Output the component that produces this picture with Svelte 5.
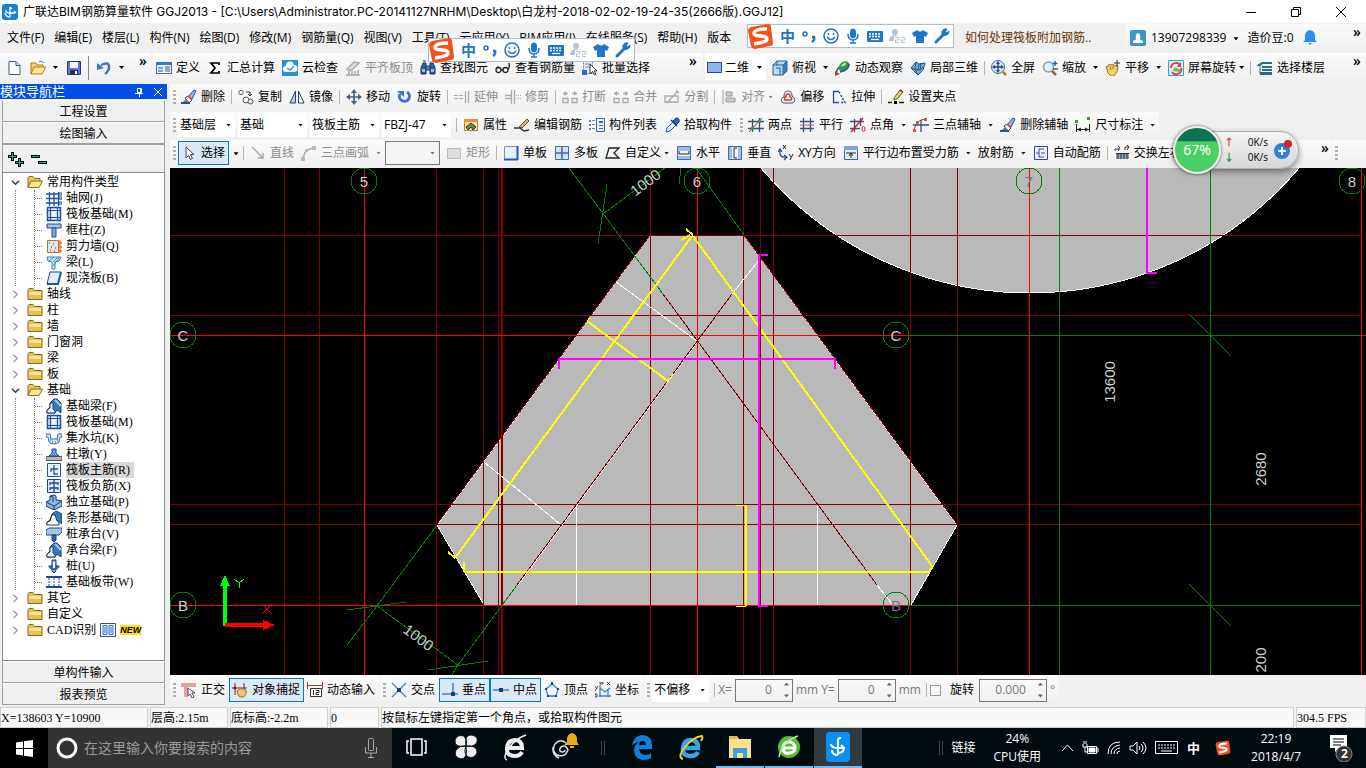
<script lang="ts">
	type Tool = {
		text?: string;
		icon?: string;
		off?: boolean;
		on?: boolean;
		drop?: boolean;
		tight?: boolean;
		sep?: boolean;
	};

	const sep: Tool = { sep: true };

	const menus = [
		'文件(F)',
		'编辑(E)',
		'楼层(L)',
		'构件(N)',
		'绘图(D)',
		'修改(M)',
		'钢筋量(Q)',
		'视图(V)',
		'工具(T)',
		'云应用(Y)',
		'BIM应用(I)',
		'在线服务(S)',
		'帮助(H)',
		'版本'
	];

	const mainTools: Tool[] = [
		{ text: '定义', icon: 'define' },
		{ text: '汇总计算', icon: 'sum' },
		{ text: '云检查', icon: 'cloud' },
		{ text: '平齐板顶', icon: 'level', off: true },
		{ text: '查找图元', icon: 'find' },
		{ text: '查看钢筋量', icon: 'glasses' },
		{ text: '批量选择', icon: 'batch' }
	];

	const viewTools: Tool[] = [
		{ text: '俯视', icon: 'cube', drop: true },
		{ text: '动态观察', icon: 'orbit' },
		{ text: '局部三维', icon: 'local3d' },
		sep,
		{ text: '全屏', icon: 'fullscreen' },
		{ text: '缩放', icon: 'zoom', drop: true },
		{ text: '平移', icon: 'hand', drop: true },
		{ text: '屏幕旋转', icon: 'spin', drop: true, tight: true },
		sep,
		{ text: '选择楼层', icon: 'floors' }
	];

	const editTools: Tool[] = [
		{ text: '删除', icon: 'brush' },
		sep,
		{ text: '复制', icon: 'copy' },
		{ text: '镜像', icon: 'mirror' },
		sep,
		{ text: '移动', icon: 'move' },
		{ text: '旋转', icon: 'rotate' },
		sep,
		{ text: '延伸', icon: 'extend', off: true },
		{ text: '修剪', icon: 'trim', off: true },
		sep,
		{ text: '打断', icon: 'break', off: true },
		{ text: '合并', icon: 'break', off: true },
		{ text: '分割', icon: 'split', off: true },
		sep,
		{ text: '对齐', icon: 'align', off: true, drop: true, tight: true },
		{ text: '偏移', icon: 'offset' },
		{ text: '拉伸', icon: 'stretch' },
		sep,
		{ text: '设置夹点', icon: 'pencil' }
	];

	const partTools: Tool[] = [
		sep,
		{ text: '属性', icon: 'props' },
		{ text: '编辑钢筋', icon: 'rebar' },
		{ text: '构件列表', icon: 'list' },
		{ text: '拾取构件', icon: 'dropper' }
	];

	const axisTools: Tool[] = [
		{ text: '两点', icon: 'twoPoint' },
		{ text: '平行', icon: 'parallel' },
		{ text: '点角', icon: 'pointAngle', drop: true },
		{ text: '三点辅轴', icon: 'threePoint', drop: true },
		{ text: '删除辅轴', icon: 'brush' },
		{ text: '尺寸标注', icon: 'dimension', drop: true }
	];

	const lineTools: Tool[] = [
		{ text: '选择', icon: 'cursor', on: true, drop: true },
		sep,
		{ text: '直线', icon: 'line', off: true },
		{ text: '三点画弧', icon: 'arc', off: true, drop: true }
	];

	const slabTools: Tool[] = [
		{ text: '矩形', icon: 'rect', off: true },
		sep,
		{ text: '单板', icon: 'slab' },
		{ text: '多板', icon: 'slabs' },
		{ text: '自定义', icon: 'custom', drop: true, tight: true },
		{ text: '水平', icon: 'horizontal' },
		{ text: '垂直', icon: 'vertical' },
		{ text: 'XY方向', icon: 'xy' },
		{ text: '平行边布置受力筋', icon: 'edge', drop: true },
		{ text: '放射筋', drop: true },
		{ text: '自动配筋', icon: 'auto' },
		sep,
		{ text: '交换左右', icon: 'swap' }
	];

	const snapTools: Tool[] = [
		{ text: '正交', icon: 'ortho' },
		{ text: '对象捕捉', icon: 'snap', on: true },
		{ text: '动态输入', icon: 'dynInput' }
	];

	const pointTools: Tool[] = [
		{ text: '交点', icon: 'cross' },
		{ text: '垂点', icon: 'perp', on: true },
		{ text: '中点', icon: 'mid', on: true },
		{ text: '顶点', icon: 'vertex' },
		{ text: '坐标', icon: 'coord' }
	];

	const tree = [
		{
			name: '常用构件类型',
			children: [
				['轴网(J)', 'grid'],
				['筏板基础(M)', 'raft'],
				['框柱(Z)', 'column'],
				['剪力墙(Q)', 'wall'],
				['梁(L)', 'beam'],
				['现浇板(B)', 'cast']
			]
		},
		{ name: '轴线' },
		{ name: '柱' },
		{ name: '墙' },
		{ name: '门窗洞' },
		{ name: '梁' },
		{ name: '板' },
		{
			name: '基础',
			children: [
				['基础梁(F)', 'fbeam'],
				['筏板基础(M)', 'raft'],
				['集水坑(K)', 'pit'],
				['柱墩(Y)', 'pier'],
				['筏板主筋(R)', 'mainbar'],
				['筏板负筋(X)', 'negbar'],
				['独立基础(P)', 'pad'],
				['条形基础(T)', 'strip'],
				['桩承台(V)', 'cap'],
				['承台梁(F)', 'fbeam'],
				['桩(U)', 'pile'],
				['基础板带(W)', 'band']
			]
		},
		{ name: '其它' },
		{ name: '自定义' },
		{ name: 'CAD识别', isNew: true }
	];

	const selected = '筏板主筋(R)';

	// 16x16 icon bodies
	const icons: Record<string, string> = {
		file: '<path d="M3 1.500h7l4 4v9H3z" fill="#fff" stroke="#355a8c"/><path d="M10 1.500v4h4" fill="#cfe0f5" stroke="#355a8c"/>',
		open: '<path d="M1 14V3h5l1 2h6v3" fill="#f7d36b" stroke="#b07b10"/><path d="M1 14l3-7h12l-4 7z" fill="#ffe79a" stroke="#b07b10"/><path d="M9 2q3-2 5 1" fill="none" stroke="#4a6ea5"/>',
		save: '<path d="M1.500 1.500h13v13h-13z" fill="#5f78d8" stroke="#27357f"/><path d="M4 2h8v6H4z" fill="#f5f8ff"/><path d="M4 10h8v5H4z" fill="#26305f"/><path d="M9 11h2v3H9z" fill="#fff"/>',
		undo: '<path d="M5 5q8-4 8 2q0 4-4 7" fill="none" stroke="#3f73d6" stroke-width="2.500"/><path d="M1 3v7l7-2z" fill="#3f73d6"/>',
		define: '<path d="M.5 2.500h15v11H.5z" fill="#eef4ff" stroke="#3d6ab5"/><path d="M1 3h14v2H1z" fill="#3d78d8"/><path d="M2 7h5v2H2zM2 10h5v2H2z" fill="#7ea0d0"/><path d="M9 7h5M9 9h5M9 11h5" stroke="#555"/>',
		sum: '<path d="M12 5V3H4l4 5-4 5h8v-2" fill="none" stroke="#000" stroke-width="1.700"/>',
		cloud: '<path d="M0 0h16v16H0z" fill="#1f93dc"/><path d="M4 12a3 3 0 010-6 4 4 0 018-1 3.500 3.500 0 010 7z" fill="#fff"/><path d="M5 8l3 2 4-4" fill="none" stroke="#1f93dc" stroke-width="1.500"/>',
		level: '<path d="M2 9l7-7 5 1-7 7zM1 15h14M4 10v5M7 11v4M10 11v4M13 10v5" fill="#ddd" stroke="#aaa" stroke-width="1.500"/>',
		find: '<path d="M1 14V8l2-5h3v11zM15 14V8l-2-5h-3v11z" fill="#2d5ea8" stroke="#1b335f"/><path d="M6 6h4v4H6zM3 1h3M10 1h3" fill="#4f86cf" stroke="#1b335f"/><path d="M2 9h3v3H2zM11 9h3v3h-3z" fill="#9cc0ea"/>',
		glasses: '<path d="M1 10a2.500 2.500 0 105 0a2.500 2.500 0 10-5 0M8 10a2.500 2.500 0 105 0a2.500 2.500 0 10-5 0M6 10h2M13 10q2-3 1-7M1 10q0-3 3-3" fill="none" stroke="#222" stroke-width="1.300"/>',
		batch: '<path d="M1.500 1.500h9v12h-9z" fill="#e4e9f2" stroke="#888" stroke-dasharray="2 1"/><path d="M0 10h5v5H0z" fill="#2f6bd3"/><path d="M3 4h6M3 7h6" stroke="#7a97c0"/><path d="M8 4v10l2.500-2.500 2 3.500 1.500-1-2-3h3z" fill="#fff" stroke="#333"/>',
		cube: '<path d="M1 5l4-4h10v10l-4 4H1z" fill="#bcd9f3" stroke="#245a8f"/><path d="M1 5h10v10M11 5l4-4M4 8h4v7M5 1v4" fill="none" stroke="#245a8f"/><path d="M11 5l4-4v10l-4 4z" fill="#3a79b4"/>',
		orbit: '<path d="M1 14Q2 7 8 5" fill="none" stroke="#2f5598" stroke-width="1.500"/><ellipse cx="9" cy="6.500" rx="6" ry="4.500" transform="rotate(-40 9 6.500)" fill="#2f9a4a"/><path d="M6 6q3-4 5-3-1 4-5 3" fill="#c6ecca"/><path d="M14 4q0 6-9 8" fill="none" stroke="#2f5598" stroke-width="1.500"/><path d="M0 11l5 3-5 2z" fill="#c23a2e"/>',
		local3d: '<path d="M1 8l5-6 3 2 6-1-2 7-5 5-3-3z" fill="#7fb0dc" stroke="#1d5583"/><path d="M6 2l-1 7 3 6M9 4l-1 6M1 8l7 2 6-3M11 3l-1 8" fill="none" stroke="#1d5583"/>',
		fullscreen: '<circle cx="7" cy="7" r="6.500" fill="#d5e4f8" stroke="#4a6a9a"/><path d="M7 3v8M3 7h8" stroke="#20487f" stroke-width="1.300"/><path d="M7 1L5 4h4zM7 13l-2-3h4zM1 7l3-2v4zM13 7l-3-2v4z" fill="#20487f"/><path d="M12 12l3 3" stroke="#b57a24" stroke-width="2.500"/>',
		zoom: '<circle cx="6.500" cy="7" r="5" fill="#e6f0fb" stroke="#8aa0ba" stroke-width="1.500"/><path d="M10 11l4 4" stroke="#9a6a32" stroke-width="2.500"/><path d="M13 1v5M10.500 3.500h5M11 9h5" stroke="#2a5fae" stroke-width="1.500"/>',
		hand: '<path d="M2 9L1 7l2-1 1-2 2 1 2-1 1 2 3-1 1 2-1 5-3 4H6l-3-3z" fill="#f0cc72" stroke="#a4741c"/><path d="M5 6l1 4M8 6v3" stroke="#a4741c"/><path d="M12 0v7M9 3h6" stroke="#333"/>',
		spin: '<path d="M.5.5h15v15H.5z" fill="#d4edf8" stroke="#3a9ccb"/><path d="M3 8a5 5 0 019-3M13 8a5 5 0 01-9 4" fill="none" stroke="#d93a2e" stroke-width="1.800"/><path d="M5 11q1-5 4-3t4 1v3z" fill="#74b64e"/><path d="M13 2v5H9z" fill="#d93a2e"/>',
		floors: '<path d="M0 5l5-3h10v2H6L3 6H0zM5 6h10v2H5zM5 9h10v2H5zM3 12h12v3H3z" fill="#2c6c7c"/><path d="M3 6v8" stroke="#2c6c7c"/>',
		brush: '<path d="M7 8l6-7 2 1-4 8z" fill="#8fb4e6" stroke="#2f4a7f"/><path d="M4 9l3-2 4 4-3 3z" fill="#f4f4f4" stroke="#444"/><path d="M7 7l4 4" stroke="#d23b2c" stroke-width="1.500"/><path d="M0 14h9" stroke="#24509a" stroke-width="2"/><path d="M2 13l3-3 3 3z" fill="#777"/>',
		copy: '<circle cx="3" cy="3.500" r="2.200" fill="#fff" stroke="#556"/><circle cx="8" cy="11" r="3" fill="#fff" stroke="#556"/><circle cx="12.500" cy="12.500" r="2.500" fill="#e5e5e5" stroke="#556"/><path d="M8 3h4v4M10 5l2 2 2-2" fill="none" stroke="#333"/>',
		mirror: '<path d="M6.500 2v12H1z" fill="#b8cdea" stroke="#24437e"/><path d="M9.500 2v12H15z" fill="#fff" stroke="#24437e"/>',
		move: '<path d="M8 2v12M2 8h12" stroke="#4a5f7e" stroke-width="1.700"/><path d="M8 0L5 4h6zM8 16l-3-4h6zM0 8l4-3v6zM16 8l-4-3v6z" fill="#4a5f7e"/>',
		rotate: '<path d="M3 5a5 5 0 107-2" fill="none" stroke="#3d72cf" stroke-width="3"/><path d="M0 2h7v6z" fill="#3d72cf"/>',
		extend: '<path d="M0 6.500h9M0 9.500h9" stroke="#aaa" stroke-dasharray="4 1"/><path d="M11.500 2v12M14.500 2v12" stroke="#aaa" stroke-width="1.300"/>',
		trim: '<path d="M6.500 1v14M9.500 1v14M0 6.500h6M0 9.500h6" stroke="#aaa" stroke-width="1.300"/><path d="M11 6.500h5M11 9.500h5" stroke="#aaa" stroke-dasharray="1 1"/>',
		break: '<path d="M1 4.500h5M10 4.500h5M1 9.500h5v4H1zM10 9.500h5v4h-5z" fill="none" stroke="#aaa" stroke-width="1.300"/><path d="M4 2v5L1 4.500zM12 2v5l3-2.500z" fill="#aaa"/>',
		split: '<path d="M1 7h13v6H1zM3 14L13 3M12 1l3 3" fill="none" stroke="#aaa" stroke-width="1.300"/>',
		align: '<path d="M2 1v14" stroke="#999"/><path d="M5 3h6v4H5zM5 9h9v4H5z" fill="#ccc" stroke="#999"/>',
		offset: '<path d="M3 14q-4-4 1-6 0-6 4-6t4 5q5 3 1 7z" fill="#e9f0f8" stroke="#395879"/><path d="M5 11q-1-3 1-3 0-3 2-3t2 3q3 1 1 3z" fill="#fff" stroke="#d33c35" stroke-width="1.500"/>',
		stretch: '<path d="M8 2.500H2.500v11H8" fill="none" stroke="#2c4b88" stroke-width="1.300"/><path d="M8 3l6 10.500H9" fill="none" stroke="#2c4b88" stroke-dasharray="2 1.500" stroke-width="1.500"/>',
		pencil: '<path d="M6 9l6-8 3 2-6 7-3 1z" fill="#e5cf86" stroke="#6c5426"/><path d="M12 1l3 2" stroke="#b8302a" stroke-width="2"/><path d="M0 13.500h4M11 13.500h5" stroke="#222" stroke-width="1.500"/><path d="M6 12h3v3H6z" fill="#000"/>',
		props: '<path d="M1.500 2.500h13v11h-13z" fill="#ffe7b0" stroke="#c87a1a"/><path d="M1 2h14v3H1z" fill="#e6913a"/><path d="M3 10l5-4 5 4-3 3-2-3-3 3z" fill="#5d8c4a" stroke="#333"/>',
		rebar: '<path d="M5 10l8-8 2 2-7 7z" fill="#e3b07a" stroke="#7a4a20"/><path d="M0 11h6l4 3 5-1" fill="none" stroke="#333" stroke-width="1.500"/>',
		list: '<path d="M7.500 1.500h8v13h-8z" fill="#eaf2ff" stroke="#44679e"/><path d="M10 4h4v2h-4zM10 8h4v1h-4zM10 11h4v1h-4z" fill="#44679e"/><path d="M0 3h2v2H0zM3 3h3v1H3zM0 7h2v2H0zM3 7h3v1H3zM0 11h2v2H0zM3 11h3v1H3z" fill="#5f86bd"/>',
		dropper: '<path d="M2 15l1-4 6-6 3 3-6 6z" fill="#d9ebff" stroke="#355b93"/><path d="M9 4l3-3q4 0 3 4l-3 3z" fill="#2967bd" stroke="#163a78"/><path d="M7 3l6 6" stroke="#163a78" stroke-width="1.500"/>',
		twoPoint: '<path d="M4.500 2v13M11.500 1v14M0 4.500h16M0 11.500h16" stroke="#33507a" stroke-width="1.300"/><path d="M1 15L14 1" stroke="#c22"/><path d="M3 10h3v3H3zM10 3h3v3h-3z" fill="#3a9a3a"/>',
		parallel: '<path d="M4.500 1v14M11.500 1v14M1 4.500h14M1 11.500h14" stroke="#394f80" stroke-width="1.300"/><path d="M1 8h14" stroke="#c55"/>',
		pointAngle: '<path d="M4.500 2v13M10.500 1v8M0 4.500h14M0 11.500h10" stroke="#33507a" stroke-width="1.300"/><path d="M1 15L13 1" stroke="#c22" stroke-width="1.300"/><ellipse cx="13.500" cy="12" rx="1.500" ry="2.500" fill="#fff" stroke="#c22"/>',
		threePoint: '<path d="M1 13Q3 3 12 2" fill="none" stroke="#c22"/><path d="M0 8h16M8 3v12" stroke="#33507a" stroke-width="1.300"/><path d="M0 12h3v3H0zM3 4h3v3H3zM11 1h3v3h-3z" fill="#e04a4a"/>',
		dimension: '<path d="M1.500 7v8M14.500 7v8M2 12.500h12" stroke="#222"/><path d="M2 12.500l4-2v4zM14 12.500l-4-2v4z" fill="#222"/><path d="M0 3h3v3H0zM12 0h3v3h-3z" fill="#3a9a3a"/>',
		cursor: '<path d="M5 2v11l2.500-2.500 2 4 2-1-2-4H13z" fill="#fff" stroke="#445"/>',
		line: '<path d="M2 2l11 11M13 8v5H8" fill="none" stroke="#aaa" stroke-width="1.500"/>',
		arc: '<path d="M2 14Q3 4 13 3" fill="none" stroke="#aaa" stroke-width="1.500"/><path d="M0 12h4v4H0zM4 4h3v3H4zM11 1h4v4h-4z" fill="#bbb"/>',
		rect: '<path d="M1.500 3.500h13v10h-13z" fill="#ddd" stroke="#bbb"/>',
		slab: '<path d="M1.500 1.500h13v13h-13z" fill="#e8f0fd" stroke="#7f93b5"/><path d="M1 14.500h14M14.500 1v14" stroke="#2358c4" stroke-width="2"/>',
		slabs: '<path d="M1.500 1.500h13v13h-13z" fill="#cfe2fb" stroke="#44679e"/><path d="M8 1v14M1 8h14" stroke="#44679e" stroke-width="1.500"/>',
		custom: '<path d="M1 13L4 3h10l-5 5 5 5z" fill="none" stroke="#222" stroke-width="1.300"/>',
		horizontal: '<path d="M1.500 1.500h13v13h-13z" fill="#f2f7fe" stroke="#4068ac"/><path d="M2 2h12v4H2zM2 11h12v3H2z" fill="#9bbcec"/><path d="M3 6v3h10V6" fill="none" stroke="#222"/><path d="M1 14.500h14" stroke="#4068ac"/>',
		vertical: '<path d="M1.500 1.500h13v13h-13z" fill="#f2f7fe" stroke="#4068ac"/><path d="M2 2h3v12H2zM11 2h3v12h-3z" fill="#9bbcec"/><path d="M10 3H7v10h3" fill="none" stroke="#222"/>',
		xy: '<path d="M2 5v4q1 4 6 3M0 7l2-3 2 3M6 10l3 2-3 3" fill="none" stroke="#2d4d86" stroke-width="1.300"/><path d="M5 0l3 4M8 0L5 4M11 9l2 3M15 9l-3 6" stroke="#222"/>',
		edge: '<path d="M1.500 1.500h13v13h-13z" fill="#e5effd" stroke="#3f63b0"/><path d="M1 1h14v4H1z" fill="#7ea5e4"/><path d="M3 8h10M8 8v5M6 11l2-3 2 3" fill="none" stroke="#223"/>',
		auto: '<path d="M1.500 1.500h13v13h-13z" fill="#f1f4ff" stroke="#3d3fb0"/><path d="M11 4H6v8h5M3 8h3M8 8h4" fill="none" stroke="#3d3fb0"/>',
		swap: '<path d="M1 6V4h4M15 2h-4v3M4 1l2 2-2 3M13 0l2 2-2 3" fill="none" stroke="#333"/><path d="M2 8h13v6H2z" fill="#8ba3b8"/><path d="M2 8.500h13M4 8v6M7 8v6M10 8v6M13 8v6" stroke="#333"/>',
		ortho: '<path d="M0 1h15v4H7v10H3V5H0z" fill="#e0a3a0"/><path d="M7 6v8l2-2 2 4 2-1-2-4h3z" fill="#fff" stroke="#456"/>',
		snap: '<path d="M0 6h15M3 1v12M12 1v6" stroke="#7a2020"/><path d="M1 6l3-2v4z" fill="#7a2020"/><path d="M5 9q4-4 9-1 1 5-3 7-5 1-6-6" fill="#ecc66a" stroke="#9b6b1b"/>',
		dynInput: '<path d="M0 3.500h16M.5 0v7M15.500 0v7" stroke="#a33"/><path d="M3.500 6.500h11v8h-11z" fill="#fff" stroke="#333"/><path d="M6.500 8v5M9 8.500h3v2H9v2h3" fill="none" stroke="#222"/>',
		cross: '<path d="M1 1l14 14M15 1L1 15" stroke="#3b82d6" stroke-width="1.300"/><path d="M6 6h4v4H6z" fill="#173f80"/>',
		perp: '<path d="M0 12h16M11 1v11" stroke="#3b82d6" stroke-width="1.500"/><path d="M9 10h4v4H9z" fill="#173f80"/>',
		mid: '<path d="M0 8h16" stroke="#3b82d6" stroke-width="1.500"/><path d="M6 6h4v4H6z" fill="#173f80"/>',
		vertex: '<path d="M8 2l6 5-2 7H4L2 7z" fill="none" stroke="#3b82d6" stroke-width="1.300"/><path d="M7 0h2v3H7zM1 6h2v2H1zM13 6h2v2h-2zM3 13h2v2H3zM11 13h2v2h-2z" fill="#173f80"/>',
		coord: '<path d="M4 14h12M5 3v12M5 6l5 4 5-4M13 7v8" fill="none" stroke="#3b82d6" stroke-width="1.300"/><path d="M0 4l2 3M3 4L0 9M12 0l3 3M15 0l-3 3M5 0h3v2H5zM0 12h2v3H0z" fill="none" stroke="#222" stroke-width=".8"/>',
		folder: '<path d="M1 13.500V3.500l1-1h4l1.500 2H15v9z" fill="#f0bf48" stroke="#8a6a1c"/><path d="M2 6h12v3H2z" fill="#fdeaa8"/>',
		folderOpen: '<path d="M1 13.500v-10l1-1h4l1.500 2H13V7" fill="#f2c754" stroke="#8a6a1c"/><path d="M1 13.500L4 7h11.500L12 13.500z" fill="#ffe48d" stroke="#8a6a1c"/>',
		grid: '<path d="M3.500 2v14M8 2v14M12.500 2v14M0 4h16M0 8.500h16M0 13h16" stroke="#1c50a8" stroke-width="1.300"/><path d="M13 3h3v2h-3zM13 7h3v2h-3zM13 12h3v2h-3z" fill="#fff" stroke="#1c50a8"/>',
		raft: '<path d="M1.500 1.500h13v13h-13z" fill="#e6eefa" stroke="#1b4d9c" stroke-width="1.500"/><path d="M4.500 2v12M11.500 2v12M2 4.500h12M2 11.500h12" stroke="#1b4d9c" stroke-width="1.200"/><path d="M6.500 6.500h3v3h-3z" fill="#fff"/>',
		column: '<path d="M1 2h14v4H1z" fill="#a9c3ea" stroke="#1b4690"/><path d="M6 6h4v9H6z" fill="#7fa8e4" stroke="#1b4690"/>',
		wall: '<path d="M1.500 2.500h11v12h-11z" fill="#e4e4e4" stroke="#b86a3a"/><path d="M3 5h1M7 6h1M5 9h1M9 10h1M4 12h1M8 13h1" stroke="#444"/><path d="M14 2v13M12 5h4M12 9h4M12 13h4" stroke="#d9761c" stroke-width="1.300"/>',
		beam: '<path d="M1 3h14l-2 4-4 1v7H6V8L2 7z" fill="#d3e8f8" stroke="#2d86c8"/><path d="M3 7l5-4M7 8l5-5M7 12l6-8" stroke="#2d86c8"/>',
		cast: '<path d="M4 2h11l-3 12H1z" fill="#e4eefc" stroke="#1b4690"/><path d="M1 14h11l3-12" fill="none" stroke="#1c55b5" stroke-width="2"/>',
		fbeam: '<path d="M1 15v-3l3-3V5l4-4h3l4 4v10l-4-3-2 3z" fill="#3779bd" stroke="#17406f"/><path d="M1 15v-3l3-2V6l3-2v7l2 2v2z" fill="#e8f1fb" stroke="#17406f"/><path d="M9 2l6 6" stroke="#a9cbec" stroke-width="2"/>',
		pit: '<path d="M0 4h4l1 5h6l1-5h4v3h-2l-1 5q-5 4-10 0L2 7H0z" fill="#d9e9f9" stroke="#2a6cb0"/><path d="M4 10h1M6 12h1M9 12h1M11 10h1" stroke="#174a82"/>',
		pier: '<path d="M0 10.500h16v4H0z" fill="#b8b8b8" stroke="#555"/><path d="M3 10l3-3V3h4v4l3 3z" fill="#6fa0dc" stroke="#1e4a8c"/>',
		mainbar: '<path d="M1.500 1.500h13v13h-13z" fill="#eaf2fe" stroke="#1b55a8"/><path d="M8 3v9h4M5 10V7h7" fill="none" stroke="#1b55a8" stroke-width="1.300"/>',
		negbar: '<path d="M1.500 1.500h13v13h-13z" fill="#dfeafb" stroke="#1b4690"/><path d="M8 1v14M4 7V5h8v2M4 12v-2h8v2" fill="none" stroke="#1b4690" stroke-width="1.300"/>',
		pad: '<path d="M0 8l4-2V2l4-1 2 1v4l6 1v5l-8 4-8-4z" fill="#8db8e2" stroke="#173d6d"/><path d="M0 8l8 4 8-5M8 12v4M4 2l3 1v5" fill="none" stroke="#173d6d"/>',
		strip: '<path d="M1 15v-3l3-2 2-6 4-3 6 3v10l-4-3" fill="#3779bd" stroke="#17406f"/><path d="M1 15v-3l3-1 2-6h3l2 6 2 1v3z" fill="#fff" stroke="#17406f"/>',
		cap: '<path d="M0 4l3-2h13v4l-3 3H0z" fill="#a7c5ea" stroke="#1b4a80"/><path d="M6 9h4v5l-2 2-2-2z" fill="#2c66b0" stroke="#17406f"/>',
		pile: '<path d="M6 2h4v11l-2 2-2-2z" fill="#7aa6dc" stroke="#17406f"/><path d="M2 8q6-3 12 0-2 4-6 4T2 8z" fill="#2c66b0"/><path d="M7 4h2v6H7z" fill="#fff"/>',
		band: '<path d="M0 3h16M0 13h16" stroke="#1b4a9c" stroke-width="2"/><path d="M3 4v9M8 4v9M13 4v9" stroke="#1b4a9c" stroke-dasharray="2 1"/>',
		cad: '<path d="M.5 1.500h15v13H.5z" fill="#fff" stroke="#456"/><path d="M3 3.500h4v9H3zM9 3.500h4v9H9z" fill="#dcebff" stroke="#2a6fd0"/><path d="M4 6h2M4 8h2M4 10h2M10 6h2M10 8h2M10 10h2" stroke="#2a6fd0"/>'
	};

	const darkX = [284, 319, 436, 483, 498, 501, 502, 650, 743, 760, 773, 910, 957];
	const darkY = [235, 315, 504, 524];
	const bubbles = [
		['5', 364, 181],
		['6', 697, 181],
		['7', 1029, 181, true],
		['8', 1352, 181],
		['C', 183, 335],
		['C', 896, 335],
		['B', 183, 605],
		['B', 896, 605, true]
	] as const;
	const dims = [
		['1000', 645, 182, -37],
		['1000', 419, 637, 37],
		['13600', 1109, 382, -90],
		['2680', 1260, 469, -90],
		['200', 1260, 660, -90]
	] as const;

	let offsetX = $state('0');
	let offsetY = $state('0');
	let angle = $state('0.000');
	let rotate = $state(false);
</script>

{#snippet icon(name: string)}
	<svg class="icon" viewBox="0 0 16 16" fill="none" aria-hidden="true">{@html icons[name]}</svg>
{/snippet}

{#snippet tools(items: Tool[])}
	{#each items as t}
		{#if t.sep}
			<span class="sep"></span>
		{:else}
			<button class="tool" class:on={t.on} class:tight={t.tight} disabled={t.off}>
				{#if t.icon}{@render icon(t.icon)}{/if}
				<span>{t.text}</span>
				{#if t.drop && !t.on}<i class="caret"></i>{/if}
			</button>
			{#if t.drop && t.on}<button class="split" aria-label="更多"><i class="caret"></i></button>{/if}
		{/if}
	{/each}
{/snippet}

{#snippet combo(label: string, value: string, size: string)}
	<span class="combo {size}">
		<select aria-label={label}><option>{value}</option></select>
		<i class="caret"></i>
	</span>
{/snippet}

{#snippet sogouLogo()}
	<svg class="sogou-logo" viewBox="0 0 27 27" aria-hidden="true">
		<path d="M4 4L21 1q3 0 3 3l2 16q0 3-3 3L8 26q-3 0-4-3L1 8q0-3 3-4z" fill="#f4511e" />
		<path
			d="M20 6q-12 0-13 4c0 5 13 1 13 6 0 3-7 4-13 5"
			fill="none"
			stroke="#fff"
			stroke-width="3.500"
		/>
	</svg>
{/snippet}

{#snippet sogou(place: string)}
	<div class="sogou {place}">
		{@render sogouLogo()}
		<b>中</b>
		<svg width="16" height="16" viewBox="0 0 16 16" fill="none" stroke="#1f74cc">
			<circle cx="4" cy="6" r="2" stroke-width="1.500" />
			<path d="M11 9h2q1 3-2 5" stroke-width="2.500" />
		</svg>
		<svg width="16" height="16" viewBox="0 0 16 16" fill="none" stroke="#1f74cc" stroke-width="1.500">
			<circle cx="8" cy="8" r="7" />
			<path d="M4 9q4 5 8 0M5.500 5v2M10.500 5v2" />
		</svg>
		<svg width="16" height="16" viewBox="0 0 16 16" fill="none" stroke="#1f74cc">
			<rect x="5.500" y="1" width="5" height="9" rx="2.500" fill="#1f74cc" />
			<path d="M3 6q0 6 5 6t5-6M8 12v3M5 15h6" stroke-width="1.500" />
		</svg>
		<svg width="16" height="16" viewBox="0 0 16 16">
			<rect y="3" width="16" height="11" rx="1" fill="#1f74cc" />
			<path d="M2 6h12M2 8.500h12" stroke="#fff" stroke-dasharray="2 1" stroke-width="1.300" />
			<path d="M4 11.500h8" stroke="#fff" stroke-width="1.300" />
		</svg>
		<svg width="17" height="16" viewBox="0 0 17 16">
			<circle cx="6" cy="4" r="3" fill="#b7c3d3" />
			<path d="M0 13q0-6 6-6t6 6z" fill="#b7c3d3" />
			<rect x="5" y="8" width="12" height="8" fill="#fff" />
			<path
				d="M6 9.500h4v2.500H6.500v2.500H10M12 9.500h4v2.500h-3.500v2.500H16"
				fill="none"
				stroke="#b7c3d3"
			/>
		</svg>
		<svg width="16" height="16" viewBox="0 0 16 16">
			<path d="M5 2q3 3 6 0l5 3-2 4-2-1v7H4V8L2 9 0 5z" fill="#1f74cc" />
		</svg>
		<svg width="16" height="16" viewBox="0 0 16 16">
			<path d="M2 14L10 6" stroke="#1f74cc" stroke-width="3" stroke-linecap="round" />
			<path d="M13 1a4 4 0 00-5 5 4 4 0 007-3l-3 2-1-1z" fill="#1f74cc" stroke="#1f74cc" />
		</svg>
	</div>
{/snippet}

<div class="desktop">
	<header class="title">
		<svg width="16" height="16" viewBox="0 0 16 16" aria-hidden="true">
			<rect width="16" height="16" rx="3" fill="#1581d8" />
			<path
				d="M8 3v10M8 3l2 2M4 6v1q0 2 4 2h5M12 7l2 2M3 9q1 4 5 4"
				fill="none"
				stroke="#fff"
				stroke-width="1.300"
			/>
		</svg>
		<h1>
			广联达BIM钢筋算量软件 GGJ2013 - [C:\Users\Administrator.PC-20141127NRHM\Desktop\白龙村-2018-02-02-19-24-35(2666版).GGJ12]
		</h1>
		<button aria-label="最小化"><svg width="10" height="10"><path d="M0 5.500h10" /></svg></button>
		<button aria-label="还原">
			<svg width="10" height="10"><path d="M.5 2.500h7v7h-7zM2.500 2V.5h7v7H8" /></svg>
		</button>
		<button aria-label="关闭"><svg width="10" height="10"><path d="M0 0l10 10M10 0L0 10" /></svg></button>
	</header>

	<nav class="menu">
		<div class="menu-items">
			{#each menus as m}
				<button>{m}</button>
			{/each}
		</div>
		<a class="tip" href="#help">如何处理筏板附加钢筋..</a>
		<div class="account">
			<svg width="16" height="16" viewBox="0 0 16 16" aria-hidden="true">
				<rect width="16" height="16" rx="2" fill="#3f93c6" />
				<path d="M3 13v-2l3-1.500Q5 3 8 3t2 6.500L13 11v2z" fill="#fff" />
			</svg>
			<button>13907298339<i class="caret"></i></button>
			<span>造价豆:0</span>
			<svg width="14" height="16" viewBox="0 0 14 16" aria-hidden="true">
				<path d="M7 0q5 1 5 6v4l2 2H0l2-2V6q0-5 5-6zM5 13h4l-2 2z" fill="#2d8cf0" />
			</svg>
			<button class="more">»</button>
		</div>
	</nav>

	<div class="row main-row">
		<div class="group main-group">
			<button class="tool quick" aria-label="新建">{@render icon('file')}</button>
			<button class="tool quick" aria-label="打开">{@render icon('open')}<i class="caret"></i></button>
			<button class="tool quick" aria-label="保存">{@render icon('save')}</button>
			<span class="sep tall"></span>
			<button class="tool quick" aria-label="撤销">{@render icon('undo')}<i class="caret"></i></button>
			<button class="more">»</button>
		</div>
		<div class="group define-group">
			{@render tools(mainTools)}
			<button class="more">»</button>
		</div>
		<div class="group view-group">
			<span class="combo view">
				<svg width="15" height="11" aria-hidden="true">
					<rect x=".5" y=".5" width="14" height="10" fill="#8fb4f2" stroke="#2b4a9b" />
				</svg>
				<select aria-label="视图模式"><option>二维</option></select>
				<i class="caret"></i>
			</span>
			{@render tools(viewTools)}
			<button class="more">»</button>
		</div>
	</div>

	<div class="body">
		<aside>
			<h2>
				<span>模块导航栏</span>
				<svg width="10" height="10" stroke="#fff" fill="none">
					<path d="M3.500 1.500h4v4h-4zM6.500 1v5M1 6.500h8M5.500 6v4" />
				</svg>
				<svg width="9" height="10" stroke="#fff"><path d="M1 1l8 8M9 1L1 9" /></svg>
			</h2>
			<button class="tab">工程设置</button>
			<button class="tab">绘图输入</button>
			<div class="fold">
				<button aria-label="全部展开">
					<svg width="17" height="16"><path d="M0 4.500h9M4.500 0v9M7 10.500h9M11.500 6v9" stroke="#000" stroke-width="3" /><path d="M1 4.500h7M4.500 1v7M8 10.500h7M11.500 7v7" stroke="#18b0a0" /></svg>
				</button>
				<button aria-label="全部折叠">
					<svg width="17" height="16"><path d="M0 4.500h9M7 10.500h9" stroke="#000" stroke-width="3" /><path d="M1 4.500h7M8 10.500h7" stroke="#18b0a0" /></svg>
				</button>
			</div>
			<ul class="tree">
				{#each tree as node}
					<li>
						<div class="node" class:open={node.children}>
							<svg class="chevron" viewBox="0 0 10 10">
								<path d={node.children ? 'M1 3l4 4 4-4' : 'M3 1l4 4-4 4'} />
							</svg>
							{@render icon(node.children ? 'folderOpen' : 'folder')}
							<span>{node.name}</span>
							{#if node.isNew}
								{@render icon('cad')}
								<em>NEW</em>
							{/if}
						</div>
						{#if node.children}
							<ul>
								{#each node.children as [name, glyph]}
									<li class="leaf" class:selected={name === selected}>
										{@render icon(glyph)}
										<span>{name}</span>
									</li>
								{/each}
							</ul>
						{/if}
					</li>
				{/each}
			</ul>
			<button class="tab">单构件输入</button>
			<button class="tab">报表预览</button>
		</aside>

		<main>
			<div class="row">
				<div class="group">
					<span class="grip"></span>
					{@render tools(editTools)}
				</div>
			</div>
			<div class="row">
				<div class="group">
					<span class="grip"></span>
					{@render combo('楼层', '基础层', 'small')}
					{@render combo('构件大类', '基础', 'wide')}
					{@render combo('构件类型', '筏板主筋', 'wide')}
					{@render combo('构件', 'FBZJ-47', 'wide')}
					{@render tools(partTools)}
				</div>
				<div class="group">
					<span class="grip"></span>
					{@render tools(axisTools)}
				</div>
			</div>
			<div class="row">
				<div class="group fill">
					<span class="grip"></span>
					{@render tools(lineTools)}
					{@render combo('画法', '', 'boxed')}
					{@render tools(slabTools)}
					<button class="more">»</button>
				</div>
				<div class="group tail"><span class="grip"></span></div>
			</div>

			<svg class="canvas" viewBox="170 168 1196 507" preserveAspectRatio="xMidYMid slice">
				<g fill="#b9b9b9" stroke="#fff">
					<circle cx="1030" cy="-59" r="352" />
					<path d="M650 235h94l213 290-46 80H484l-47-80z" />
				</g>
				<g class="dark">
					<path d="M437 524L650 235M744 235l213 289" />
					{#each darkX as x}<path d="M{x + 0.5} 168v507" />{/each}
					{#each darkY as y}<path d="M170 {y + 0.5}h1191" />{/each}
				</g>
				<g stroke="#f00">
					<path d="M364.500 168v507M697.500 168v507M1029.500 168v507M1361.500 168v507" />
					<path d="M170 335.500h740M170 605.500h740M1361 335.500h5" />
				</g>
				<g class="green">
					<path d="M1059.500 168v507M1210.500 168v507M910 335.500h451M910 605.500h451" />
					<path d="M569 168l94 126M696 168l48 67M603 214l62-46M607 184l-9 60M681 168l-2 16" />
					<path d="M437 525l-60 81-30 39M517 585l-59 80-6 10M377 606l81 59" />
					<path d="M347 610l59-8M428 670l60-9M1189 314l42 42M1189 584l42 42" />
				</g>
				<path
					d="M616 282l81 59M484 462l76 62M576.500 506v99M817.500 506v99M877 585l15 19M760 259l-28 35M698 341L518 585"
					stroke="#fff"
				/>
				<path class="dark" d="M663 294l214 291M732 294L517 585" />
				<g class="yellow">
					<path d="M692 236L455 558M693 236l239 330M464 572h465l4-6M587 321l81 60" />
					<path d="M686 229l7 6M681 240l9-5M448 552l7 6M464 562v10" />
					<path d="M746 505v101" />
					<path d="M736 505.500h10M736 606.500h10M587 321l4-5M668 381l5-7" stroke-width="1" />
				</g>
				<path
					class="magenta"
					d="M559 369v-10h276v10M768 255h-9v351h9M1147 168v105h10"
				/>
				<path class="dark" d="M760.500 235v370" />
				{#each bubbles as [label, x, y, dim]}
					<circle cx={x} cy={y} r="13" class="green" />
					<text class:dim {x} y={y + 6}>{label}</text>
				{/each}
				{#each dims as [label, x, y, turn]}
					<text {x} {y} dy="6" transform="rotate({turn} {x} {y})">{label}</text>
				{/each}
				<path d="M225 626v-42" stroke="#0f0" stroke-width="4" />
				<path d="M225 575l5 11h-10z" fill="#0f0" />
				<path d="M225 625h38" stroke="#f00" stroke-width="4" />
				<path d="M275 625l-12-5v10z" fill="#f00" />
				<path d="M234 579l5 4 5-4M239 583v5" stroke="#0f0" />
				<path d="M262 604l10 10M272 604l-10 10" stroke="#f00" />
			</svg>

			<div class="row snap">
				<div class="group">
					<span class="grip"></span>
					{@render tools(snapTools)}
				</div>
				<div class="group">
					<span class="grip"></span>
					{@render tools(pointTools)}
				</div>
				<div class="group offsets">
					<span class="grip"></span>
					{@render combo('偏移方式', '不偏移', 'small')}
					<span class="sep"></span>
					<label>X=<span class="spin"><input bind:value={offsetX} /><i></i></span>mm</label>
					<label>Y=<span class="spin"><input bind:value={offsetY} /><i></i></span>mm</label>
					<span class="sep"></span>
					<label class="check"><input type="checkbox" bind:checked={rotate} />旋转</label>
					<label><span class="spin long"><input aria-label="角度" bind:value={angle} /><i></i></span>°</label>
				</div>
			</div>
		</main>
	</div>

	<footer class="status">
		<span class="pos">X=138603 Y=10900</span>
		<span class="floor">层高:2.15m</span>
		<span class="base">底标高:-2.2m</span>
		<span class="count">0</span>
		<span class="hint">按鼠标左键指定第一个角点，或拾取构件图元</span>
		<span class="fps">304.5 FPS</span>
	</footer>

	<div class="taskbar">
		<button class="start" aria-label="开始">
			<svg width="17" height="17" fill="#fff"><path d="M0 2.500l7-1V8H0zM8 1.300L17 0v8H8zM0 9h7v6.500l-7-1zM8 9h9v8l-9-1.300z" /></svg>
		</button>
		<div class="search">
			<svg width="22" height="22"><circle cx="11" cy="11" r="9" fill="none" stroke="#fff" stroke-width="3" /></svg>
			<input aria-label="搜索" placeholder="在这里输入你要搜索的内容" />
			<svg width="12" height="20" fill="none" stroke="#aaa"><rect x="3.500" y=".5" width="5" height="12" rx="1" /><path d="M.5 9v6h11V9M6 15v4M3 19.500h6" /></svg>
		</div>
		<div class="apps">
			<button aria-label="任务视图">
				<svg width="22" height="18" fill="none" stroke="#fff" stroke-width="1.500"><path d="M5 1h11v16H5zM3 3H1v12h2M18 3h2v12h-2" /></svg>
			</button>
			<button aria-label="小工具">
				<svg width="24" height="26" viewBox="0 0 24 26" fill="#eee" stroke="#000b10"><path d="M12 12Q0 14 1 6q2-6 9-4 4 4 2 10zM12 12q-2-12 6-11 8 2 4 9-4 4-10 2zM12 12q12-1 11 7-3 6-9 4-5-4-2-11zM12 12q2 13-5 13-8-2-5-9 4-5 10-4z" /></svg>
			</button>
			<button aria-label="浏览器">
				<svg width="26" height="28" viewBox="0 0 26 28" fill="none" stroke="#eee"><path d="M5 15h15q0-8-7-8t-8 8 8 8q5 0 7-4" stroke-width="4" /><path d="M5 27q-5-2 2-12T24 2" stroke-width="1.500" /></svg>
			</button>
			<button aria-label="消息">
				<svg width="30" height="32" viewBox="0 0 30 32" fill="none" stroke="#ddd" stroke-width="1.500"><path d="M17 12q-6-5-11 1-4 7 2 11 8 3 11-5-2-6-7-3-3 4 1 5 3 0 3-2M4 16q-1 8 6 11" /><path d="M15 14l3-3q-1-8 5-9 6 1 5 9l2 3zM21 15h4v2h-4z" fill="#eeac12" stroke="none" /></svg>
			</button>
			<span class="divider"></span>
			<button aria-label="Edge">
				<svg width="22" height="26" viewBox="0 0 22 26"><path d="M1 11Q3 1 12 1q9 1 9 10v4H8q1 6 7 6 3 0 5-2v5q-3 2-8 2-9-1-9-10 0-5 5-8-3 0-7 3zm7 0h7q0-4-3-4-4 0-4 4z" fill="#0d7fdc" /></svg>
			</button>
			<button aria-label="Internet Explorer">
				<svg width="26" height="28" viewBox="0 0 26 28" fill="none"><path d="M5 15h15q0-8-7-8t-8 8 8 8q5 0 7-4" stroke="#39a5e8" stroke-width="4.500" /><path d="M5 26q-6-2 2-12T24 3q1 2-1 5" stroke="#f6c62e" stroke-width="2" /></svg>
			</button>
			<button class="run" aria-label="文件资源管理器">
				<svg width="22" height="24" viewBox="0 0 22 24"><path d="M0 1h8l2 3h12v19H0z" fill="#fbe08e" /><path d="M0 1h8v3H0z" fill="#eeb54b" /><path d="M4 23V13h14v10h-4v-5H8v5z" fill="#39a4dc" /></svg>
			</button>
			<button class="run" aria-label="360浏览器">
				<svg width="26" height="28" viewBox="0 0 26 28" fill="none"><circle cx="13" cy="14" r="11" fill="#55bd34" /><path d="M7 15h12q0-6-6-6t-6 6 6 5q4 0 6-3" stroke="#fff" stroke-width="3" /><path d="M3 24Q6 8 22 3" stroke="#bfe8a9" stroke-width="1.500" /></svg>
			</button>
			<button class="run active" aria-label="广联达">
				<svg width="24" height="30" viewBox="0 0 24 30"><rect width="24" height="30" rx="4" fill="#0890f5" /><path d="M12 23V8q0-2 3-2M12 23q-6 0-6-5M5 12q0 4 7 4h6M15 13l3 3q0 4-5 5" fill="none" stroke="#fff" stroke-width="2" /></svg>
			</button>
		</div>
		<div class="tray">
			<span class="divider"></span>
			<span class="links">链接</span>
			<span class="cpu">24%<br />CPU使用</span>
			<svg width="13" height="8"><path d="M1 7l5.500-6L12 7" /></svg>
			<svg width="17" height="14"><path d="M5.500 5.500h9v7h-9zM15 7h1v4h-1M1 3v3h4V3M2 0v3M4 0v3M3 6v5h2" /><path d="M7 7h6v4H7z" fill="#fff" /></svg>
			<svg width="14" height="14"><path d="M1 13Q1 1 13 1M4 13q0-8 9-9M7 13q0-5 6-6M10 13q0-3 3-3" /></svg>
			<svg width="18" height="14"><path d="M1 5h3l4-4v12L4 9H1zM10 5q2 2 0 4M12 3q4 4 0 8M14 1q6 6 0 12" /></svg>
			<svg width="24" height="14"><path d="M.5.5h22v12H.5z" /><path d="M3 4h18M3 7h18" stroke-dasharray="2 1" /><path d="M6 10h11" /></svg>
			<b>中</b>
			{@render sogouLogo()}
			<span class="clock">22:19<br />2018/4/7</span>
			<button class="notice" aria-label="通知">
				<svg width="24" height="28" viewBox="0 0 24 28"><path d="M1 1h17v13H10l-4 4v-4H1z" fill="#fff" stroke="none" /><path d="M4 5h11M4 8h11M4 11h8" stroke="#000" /><circle cx="15" cy="20" r="8" fill="#333" stroke="#888" /></svg>
				<span>2</span>
			</button>
		</div>
	</div>

	{@render sogou('first')}
	{@render sogou('second')}

	<div class="meter">
		<div class="ball">67%</div>
		<div class="arrows"><span>↑</span><span>↓</span></div>
		<div class="speed"><span>0K/s</span><span>0K/s</span></div>
		<svg width="20" height="20" viewBox="0 0 20 20">
			<circle cx="9" cy="11" r="8" fill="#2f7fe0" />
			<path d="M9 7v8M5 11h8" stroke="#fff" stroke-width="2" />
			<circle cx="15" cy="4" r="4" fill="#d8202a" />
		</svg>
	</div>
</div>

<style>
	:global(body) {
		margin: 0;
	}

	.desktop {
		position: relative;
		display: flex;
		flex-direction: column;
		min-height: 100vh;
		overflow: hidden;
		background: #f0f0f0;
		color: #000;
		font: 12px/16px 'Open Sans', 'Noto Sans CJK SC', sans-serif;
	}

	.desktop * {
		box-sizing: border-box;
	}

	button,
	input,
	select {
		margin: 0;
		padding: 0;
		border: none;
		border-radius: 0;
		background: none;
		color: inherit;
		font: inherit;
		white-space: nowrap;
	}

	svg {
		flex: none;
	}

	.title {
		display: flex;
		align-items: center;
		height: 23px;
		padding: 0 3px 0 2px;
		background: #fff;
	}

	.title h1 {
		flex: 1;
		margin: 0 0 0 5px;
		font: 400 12px/16px Inter, 'Noto Sans CJK SC', sans-serif;
		white-space: nowrap;
	}

	.title button {
		display: grid;
		place-items: center;
		width: 45px;
		height: 20px;
	}

	.title button svg {
		fill: none;
		stroke: #000;
	}

	/* Menu */
	.menu {
		display: flex;
		align-items: center;
		height: 30px;
	}

	.menu-items {
		display: flex;
		flex: 1;
		gap: 10px;
		padding-left: 7px;
	}

	.tip {
		width: 161px;
		color: #663300;
		text-decoration: none;
	}

	.account {
		display: flex;
		align-items: center;
		gap: 5px;
		width: 240px;
		height: 28px;
		padding: 0 3px 0 4px;
		background: linear-gradient(#fafafa, #efefef);
	}

	.account span {
		margin: 0 4px;
	}

	.more {
		align-self: flex-start;
		width: 12px;
		margin-left: auto;
		font-size: 14px;
		font-weight: 600;
	}

	.caret {
		flex: none;
		display: inline-block;
		width: 5px;
		height: 3px;
		margin-left: 7px;
		background: currentColor;
		clip-path: polygon(0 0, 100% 0, 50% 100%);
		vertical-align: middle;
	}

	/* Tool rows */
	.row {
		display: flex;
		gap: 1px;
		height: 28px;
		padding-bottom: 2px;
	}

	.group {
		display: flex;
		align-items: center;
		background: linear-gradient(#fbfbfb, #efefef);
	}

	.main-row {
		gap: 2px;
		height: 31px;
	}

	.main-group {
		width: 151px;
		padding: 0 2px;
	}

	.define-group {
		width: 550px;
		padding-right: 4px;
	}

	.view-group {
		flex: 1;
		padding-right: 3px;
	}

	.fill {
		flex: 1;
	}

	.tail {
		width: 34px;
	}

	.tool {
		display: flex;
		align-items: center;
		gap: 4px;
		height: 24px;
		padding: 0 4px 0 3px;
	}

	.tool .caret {
		margin: 0 0 0 3px;
	}

	.tool.tight .caret {
		margin-left: -1px;
	}

	.tool.on {
		padding: 0 3px 0 2px;
		border: 1px solid #0078d7;
		background: #dce9f5;
	}

	.tool:disabled {
		color: #8c8c8c;
	}

	.quick {
		padding: 0 4px;
	}

	.split {
		width: 12px;
	}

	.split .caret {
		margin-left: 2px;
	}

	.icon {
		width: 16px;
		height: 16px;
	}

	.sep {
		flex: none;
		width: 1px;
		height: 14px;
		margin: 0 3px 0 2px;
		background: #b4b4b4;
	}

	.sep.tall {
		height: 24px;
		background: #888;
	}

	.grip {
		flex: none;
		width: 3px;
		height: 14px;
		margin: 0 2px 0 3px;
		background: repeating-linear-gradient(#b0b0b0 0 2px, transparent 2px 4px);
	}

	.combo {
		display: flex;
		align-items: center;
		height: 24px;
		margin-right: 3px;
		padding: 0 4px 0 2px;
		background: #fff;
	}

	.combo select {
		flex: 1;
		width: 0;
		appearance: none;
	}

	.combo .caret {
		margin: 0;
	}

	.small {
		width: 57px;
	}

	.wide {
		width: 69px;
	}

	.view {
		width: 61px;
		gap: 3px;
	}

	.boxed {
		width: 55px;
		border: 1px solid #777;
		background: #f4f4f4;
		color: #777;
	}

	/* Sidebar */
	.body {
		display: flex;
		flex: 1;
		gap: 3px;
	}

	aside {
		display: flex;
		flex-direction: column;
		width: 167px;
		padding-bottom: 2px;
		font-family: 'Liberation Serif', 'Noto Sans CJK SC', serif;
	}

	aside h2 {
		display: flex;
		align-items: center;
		gap: 9px;
		height: 15px;
		margin: 0 0 1px;
		padding-right: 5px;
		background: #0050e6;
		color: #fff;
		font-size: 13px;
		font-weight: 400;
	}

	aside h2 span {
		flex: 1;
	}

	.tab {
		height: 22px;
		margin: 0 2px;
		border: 1px solid #a0a0a0;
		border-top-color: #fff;
		line-height: 22px;
	}

	.fold {
		display: flex;
		gap: 6px;
		height: 28px;
		margin: 0 2px;
		padding: 7px 0 0 5px;
		border: 1px solid #a0a0a0;
		border-bottom: none;
	}

	.fold button {
		height: 16px;
	}

	.tree {
		flex: 1;
		margin: 0 2px;
		padding: 1px 0 0;
		border: 1px solid #7f8c9c;
		background: #fff;
	}

	.tree,
	.tree ul {
		list-style: none;
	}

	.tree ul {
		margin: 0 0 0 12px;
		padding: 0 0 0 18px;
		border-left: 1px dotted #888;
	}

	.node,
	.leaf {
		display: flex;
		align-items: center;
		gap: 4px;
		height: 16px;
		white-space: nowrap;
	}

	.node {
		padding-left: 8px;
	}

	.leaf {
		border-left: 1px dotted #888;
	}

	.chevron {
		width: 9px;
		height: 9px;
		margin-right: 3px;
		fill: none;
		stroke: #999;
		stroke-width: 1.5;
	}

	.open .chevron {
		stroke: #333;
	}

	.node em {
		background: #ffe000;
		color: #000;
		font: italic 700 9px/10px 'Liberation Sans', sans-serif;
	}

	.leaf::before {
		content: '';
		width: 7px;
		border-top: 1px dotted #888;
	}

	.selected span {
		padding-right: 4px;
		background: #d9d9d9;
	}

	/* Drawing */
	main {
		display: flex;
		flex: 1;
		flex-direction: column;
		min-width: 0;
	}

	.canvas {
		display: block;
		flex: 1 1 0;
		width: 100%;
		min-height: 0;
		background: #000;
		fill: none;
		shape-rendering: crispEdges;
	}

	.canvas text {
		fill: #d0d0d0;
		font: 15px 'Liberation Sans', sans-serif;
		text-anchor: middle;
	}

	.canvas .dim {
		fill: #777;
	}

	.dark {
		stroke: #800000;
	}

	.green {
		stroke: #008000;
	}

	.yellow {
		stroke: #ff0;
		stroke-width: 2;
	}

	.magenta {
		stroke: #f0f;
		stroke-width: 2;
	}

	.snap {
		height: 32px;
	}

	.offsets label {
		display: flex;
		align-items: center;
		gap: 3px;
		margin-right: 3px;
		color: #777;
	}

	.offsets .check {
		gap: 9px;
		margin-right: 5px;
		color: #000;
	}

	.check input {
		width: 11px;
		height: 11px;
		border: 1px solid #999;
		appearance: none;
	}

	.spin {
		display: flex;
		align-items: center;
		width: 58px;
		height: 23px;
		padding-right: 3px;
		border: 1px solid #777;
	}

	.spin.long {
		width: 68px;
	}

	.spin input {
		flex: 1;
		width: 0;
		padding-right: 12px;
		text-align: right;
	}

	.spin i {
		width: 5px;
		height: 15px;
		background: #666;
		clip-path: polygon(0 20%, 50% 0, 100% 20%, 0 20%, 0 80%, 100% 80%, 50% 100%, 0 80%);
	}

	/* Status bar */
	.status {
		display: flex;
		gap: 2px;
		height: 21px;
		font-family: 'Liberation Serif', 'Noto Sans CJK SC', serif;
	}

	.status span {
		border: 1px solid #d0d0d0;
		background: #f8f8f8;
		line-height: 20px;
		white-space: nowrap;
	}

	.pos {
		width: 148px;
	}

	.floor {
		width: 78px;
	}

	.base {
		width: 98px;
	}

	.count {
		width: 49px;
	}

	.hint {
		flex: 1;
	}

	.fps {
		width: 70px;
	}

	/* Taskbar */
	.taskbar {
		display: flex;
		height: 40px;
		background: #000b10;
		color: #fff;
	}

	.start {
		display: grid;
		place-items: center;
		width: 48px;
		background: #000;
	}

	.search {
		display: flex;
		align-items: center;
		gap: 6px;
		width: 344px;
		padding: 0 15px 0 8px;
		background: #333;
	}

	.search input {
		flex: 1;
		font-size: 14px;
	}

	.search input::placeholder {
		color: #9a9a9a;
	}

	.apps {
		display: flex;
		flex: 1;
		gap: 1px;
		padding-left: 1px;
	}

	.apps button {
		display: grid;
		place-items: center;
		width: 48px;
		border-bottom: 2px solid transparent;
	}

	.apps .run {
		border-bottom-color: #76b9ed;
	}

	.apps .active {
		background: #2f3b40;
	}

	.divider {
		align-self: center;
		width: 4px;
		height: 14px;
		margin: 0 12px;
		border: 1px solid #444;
		border-width: 0 1px;
	}

	.tray {
		display: flex;
		align-items: center;
		gap: 8px;
		padding-right: 13px;
	}

	.tray .divider {
		margin: 0;
	}

	.tray svg {
		fill: none;
		stroke: #fff;
	}

	.cpu,
	.clock {
		margin: 0 12px 0 10px;
		line-height: 18px;
		text-align: center;
	}

	.tray b {
		font-size: 13px;
	}

	.tray .sogou-logo {
		width: 16px;
		height: 18px;
		margin: 0 2px 0 7px;
		stroke: none;
	}

	.notice {
		display: grid;
		margin-left: 8px;
	}

	.notice svg,
	.notice span {
		grid-area: 1 / 1;
	}

	.notice span {
		align-self: end;
		padding-left: 12px;
		text-align: left;
		font-weight: 700;
	}

	/* Floating windows */
	.sogou {
		position: absolute;
		display: flex;
		align-items: center;
		gap: 6px;
		height: 24px;
		padding-right: 3px;
		border: 1px solid #a9bfd8;
		background: #fff;
	}

	.sogou .sogou-logo {
		width: 27px;
		height: 27px;
		margin-left: -1px;
	}

	.sogou b {
		color: #1f74cc;
		font-size: 15px;
	}

	.first {
		top: 38px;
		left: 428px;
	}

	.second {
		top: 24px;
		left: 747px;
	}

	.meter {
		position: absolute;
		top: 131px;
		right: 67px;
		display: flex;
		align-items: center;
		width: 126px;
		height: 38px;
		padding-right: 5px;
		border: 1px solid #aaa;
		border-radius: 24px;
		background: linear-gradient(#f6f6f6, #d6d6d6);
		box-shadow: 0 3px 6px rgba(0, 0, 0, 0.4);
		font-size: 10px;
		line-height: 15px;
	}

	.ball {
		flex: none;
		width: 48px;
		height: 48px;
		margin-left: -1px;
		border: 2px solid #eee;
		border-radius: 50%;
		background: linear-gradient(#0c7450 0 30%, #4bd068 31%);
		box-shadow: 0 0 3px #444;
		color: #fff;
		font-size: 14px;
		line-height: 44px;
		text-align: center;
	}

	.arrows,
	.speed {
		display: flex;
		flex-direction: column;
	}

	.arrows {
		margin-left: 3px;
		color: #16914c;
		font-weight: 700;
	}

	.arrows span:first-child {
		color: #e0453a;
	}

	.speed {
		margin: 0 5px 0 auto;
	}
</style>
